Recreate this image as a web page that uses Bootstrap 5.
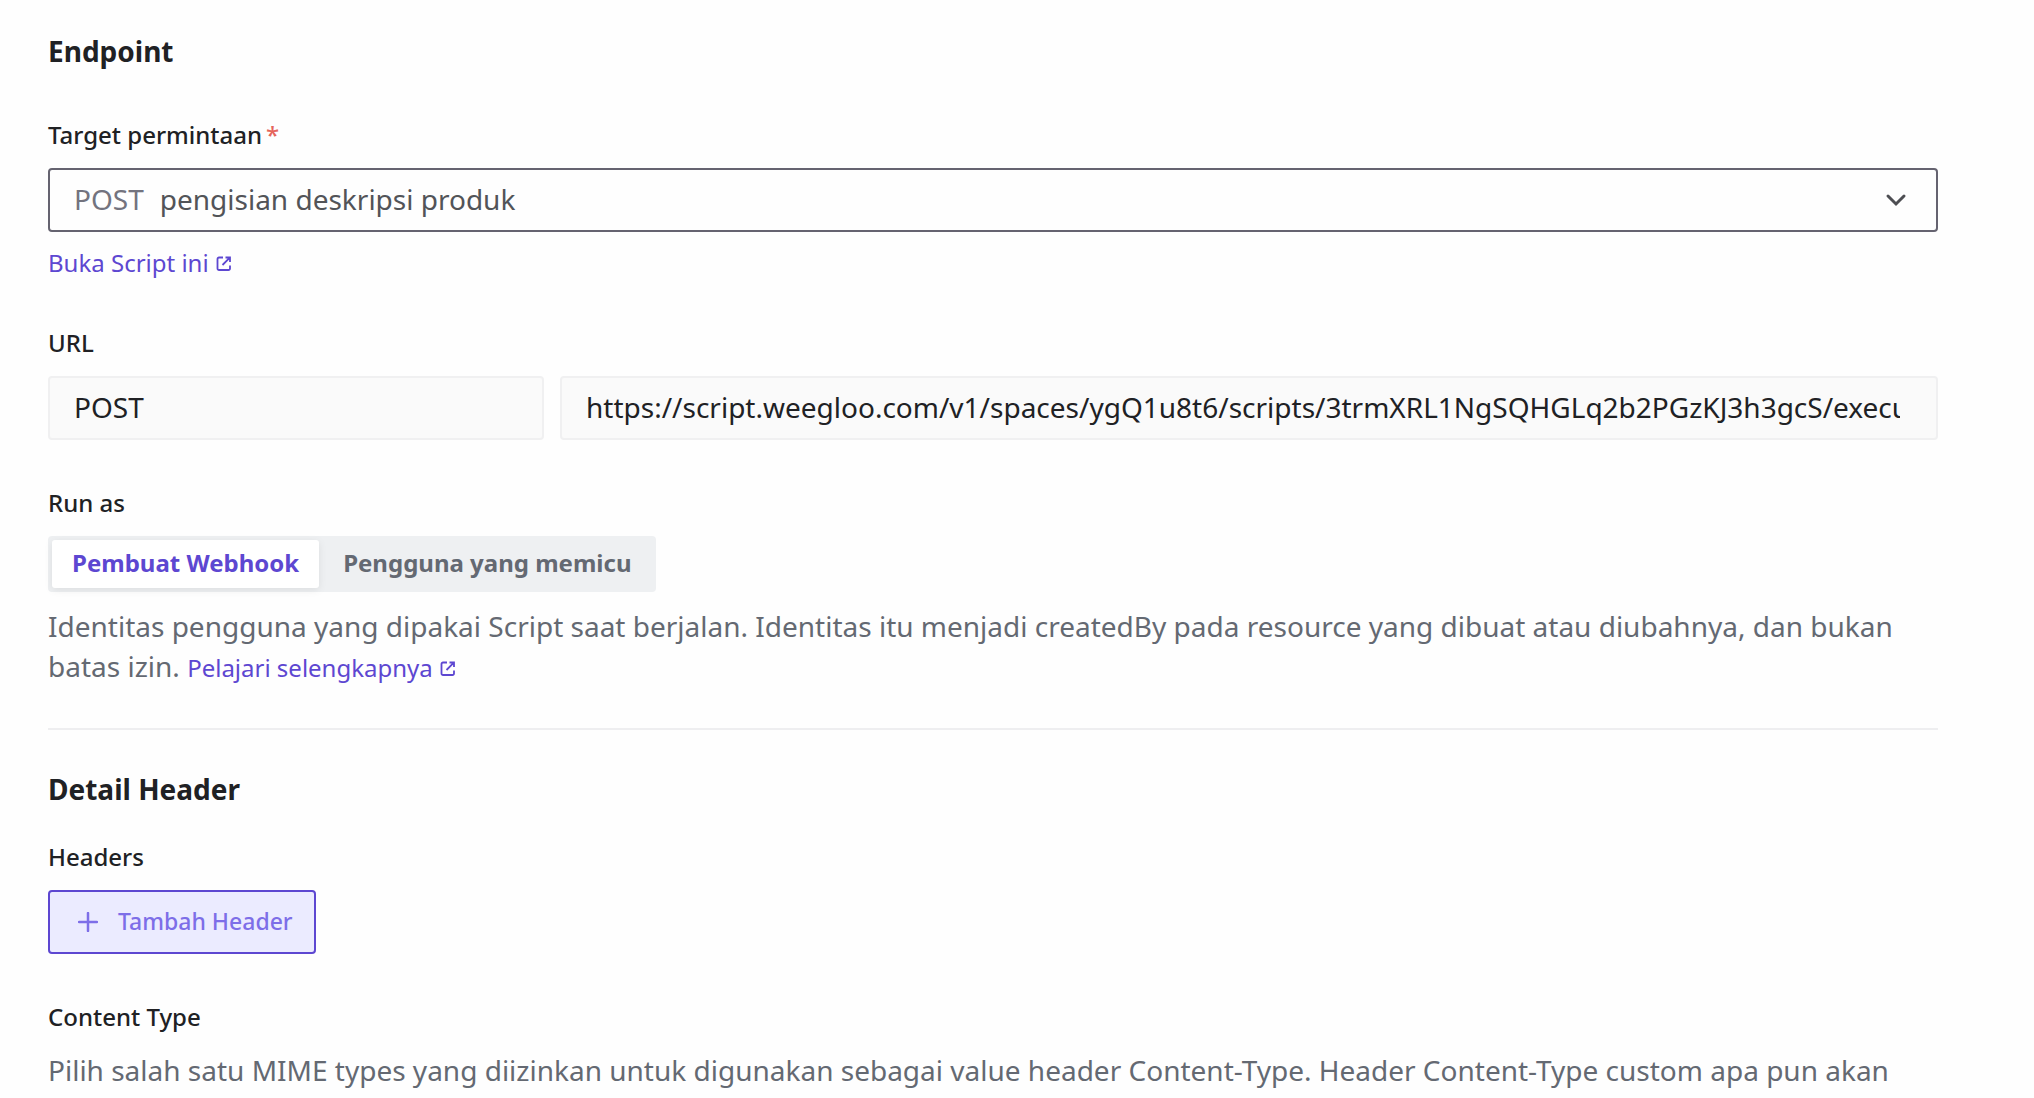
<!DOCTYPE html>
<html lang="id">
<head>
<meta charset="utf-8">
<meta name="viewport" content="width=device-width, initial-scale=1">
<title>Webhook</title>
<link href="https://cdn.jsdelivr.net/npm/bootstrap@5.3.0/dist/css/bootstrap.min.css" rel="stylesheet">
<style>
  :root { --accent: #5d47d1; --ink: #202124; --soft: #646972; --line: #eeeef0; }
  body { font-family: "Noto Sans", sans-serif; font-size: 28px; line-height: 40px; color: var(--ink); background: #fefefe; overflow: hidden; }
  .webhook-form { padding: 32px 96px 32px 48px; }
  .section-title { font-size: 28px; line-height: 38px; font-weight: 700; margin: 0; padding-bottom: 2px; }
  .field-stack { display: flex; flex-direction: column; gap: 48px; }
  .field-title { display: block; font-size: 24px; line-height: 30px; font-weight: 500; margin: 0 0 18px; padding: 0; float: none; }
  .required { color: #e5655c; font-weight: 500; margin-left: 4px; }
  .target-box { height: 64px; border: 2px solid #656370; border-radius: 4px; padding: 0 24px; gap: 16px; background: #fefefe; }
  .target-box .method { color: #73737e; padding-bottom: 2px; }
  .target-box .form-select { border: 0; box-shadow: none; background: none; padding: 0 0 2px; font-size: 28px; line-height: 40px; color: #525458; }
  .link-row { padding-bottom: 2px; }
  .text-link { font-size: 24px; line-height: 30px; color: var(--accent); text-decoration: none; }
  .text-link svg { width: 16px; height: 16px; margin-left: 1px; vertical-align: baseline; }
  .url-row { display: grid; grid-template-columns: 496fr 1378fr; gap: 16px; }
  .url-row .form-control { height: 64px; border: 2px solid #f0f0f1; border-radius: 4px; background: #fafafa; color: var(--ink); font-size: 28px; line-height: 40px; padding: 0 24px 2px; }
  .url-row .url-box { padding-right: 36px; }
  .segments { background: #eef0f2; border-radius: 4px; padding: 4px; gap: 4px; }
  .segments .btn { font-size: 24px; line-height: 32px; font-weight: 700; padding: 7px 20px 9px; border: 0; border-radius: 3px; color: var(--soft); }
  .segments .btn-check:checked + .btn { background: #fff; color: var(--accent); box-shadow: 0 2px 8px rgba(0,0,0,.08); }
  .hint { color: var(--soft); margin: 14px 0 2px; }
  .divider { border: 0; border-top: 2px solid var(--line); opacity: 1; margin: 40px 0; }
  .add-button { height: 64px; border: 2px solid var(--accent); border-radius: 4px; background: #ebebff; color: #7d6ee8; font-size: 23px; line-height: 32px; font-weight: 500; padding: 0 21px 0 28px; gap: 20px; }
  .add-button span { padding-bottom: 2px; }
</style>
<script src="https://cdn.jsdelivr.net/npm/bootstrap@5.3.0/dist/js/bootstrap.bundle.min.js"></script>
</head>
<body>
<svg class="d-none" aria-hidden="true">
  <symbol id="external" viewBox="0 0 16 16">
    <path d="M7 1.500H3A1.500 1.500 0 0 0 1.500 3v9.500A1.500 1.500 0 0 0 3 14h9.500a1.500 1.500 0 0 0 1.500-1.500V9.500M9.500 1.500H14V6M13.800 1.700 6.500 9" fill="none" stroke="currentColor" stroke-width="1.800"/>
  </symbol>
</svg>
<form class="webhook-form">
  <section>
    <h2 class="section-title mb-5">Endpoint</h2>
    <div class="field-stack">
      <div>
        <label class="field-title" for="target">Target permintaan<span class="required">*</span></label>
        <div class="target-box d-flex align-items-center">
          <span class="method">POST</span>
          <select class="form-select flex-grow-1" id="target">
            <option>pengisian deskripsi produk</option>
          </select>
          <svg class="flex-shrink-0" width="32" height="32" viewBox="0 0 32 32" fill="none" stroke="#4d4e52" stroke-width="3" stroke-linecap="round" aria-hidden="true"><path d="m8 12 8 8 8-8"/></svg>
        </div>
        <div class="link-row d-flex mt-3"><a class="text-link" href="#">Buka Script ini <svg aria-hidden="true"><use href="#external"/></svg></a></div>
      </div>
      <div>
        <label class="field-title" for="url">URL</label>
        <div class="url-row">
          <input class="form-control" type="text" aria-label="Metode" value="POST" readonly>
          <input class="form-control url-box" type="text" id="url" value="https://script.weegloo.com/v1/spaces/ygQ1u8t6/scripts/3trmXRL1NgSQHGLq2b2PGzKJ3h3gcS/execute" readonly>
        </div>
      </div>
      <fieldset>
        <legend class="field-title">Run as</legend>
        <div class="segments d-inline-flex align-top">
          <input class="btn-check" type="radio" name="runas" id="creator" checked>
          <label class="btn" for="creator">Pembuat Webhook</label>
          <input class="btn-check" type="radio" name="runas" id="trigger">
          <label class="btn" for="trigger">Pengguna yang memicu</label>
        </div>
        <p class="hint">Identitas pengguna yang dipakai Script saat berjalan. Identitas itu menjadi createdBy pada resource yang dibuat atau diubahnya, dan bukan batas izin. <a class="text-link" href="#">Pelajari selengkapnya <svg aria-hidden="true"><use href="#external"/></svg></a></p>
      </fieldset>
    </div>
  </section>
  <hr class="divider">
  <section>
    <h2 class="section-title">Detail Header</h2>
    <div class="field-stack pt-4 mt-2">
      <div>
        <h3 class="field-title">Headers</h3>
        <button class="add-button btn d-flex align-items-center" type="button">
          <svg width="20" height="20" viewBox="0 0 20 20" fill="none" stroke="currentColor" stroke-width="2.500" stroke-linecap="round" aria-hidden="true"><path d="M10 1v18M1 10h18"/></svg>
          <span>Tambah Header</span>
        </button>
      </div>
      <div>
        <h3 class="field-title">Content Type</h3>
        <p class="hint">Pilih salah satu MIME types yang diizinkan untuk digunakan sebagai value header Content-Type. Header Content-Type custom apa pun akan</p>
      </div>
    </div>
  </section>
</form>
</body>
</html>
